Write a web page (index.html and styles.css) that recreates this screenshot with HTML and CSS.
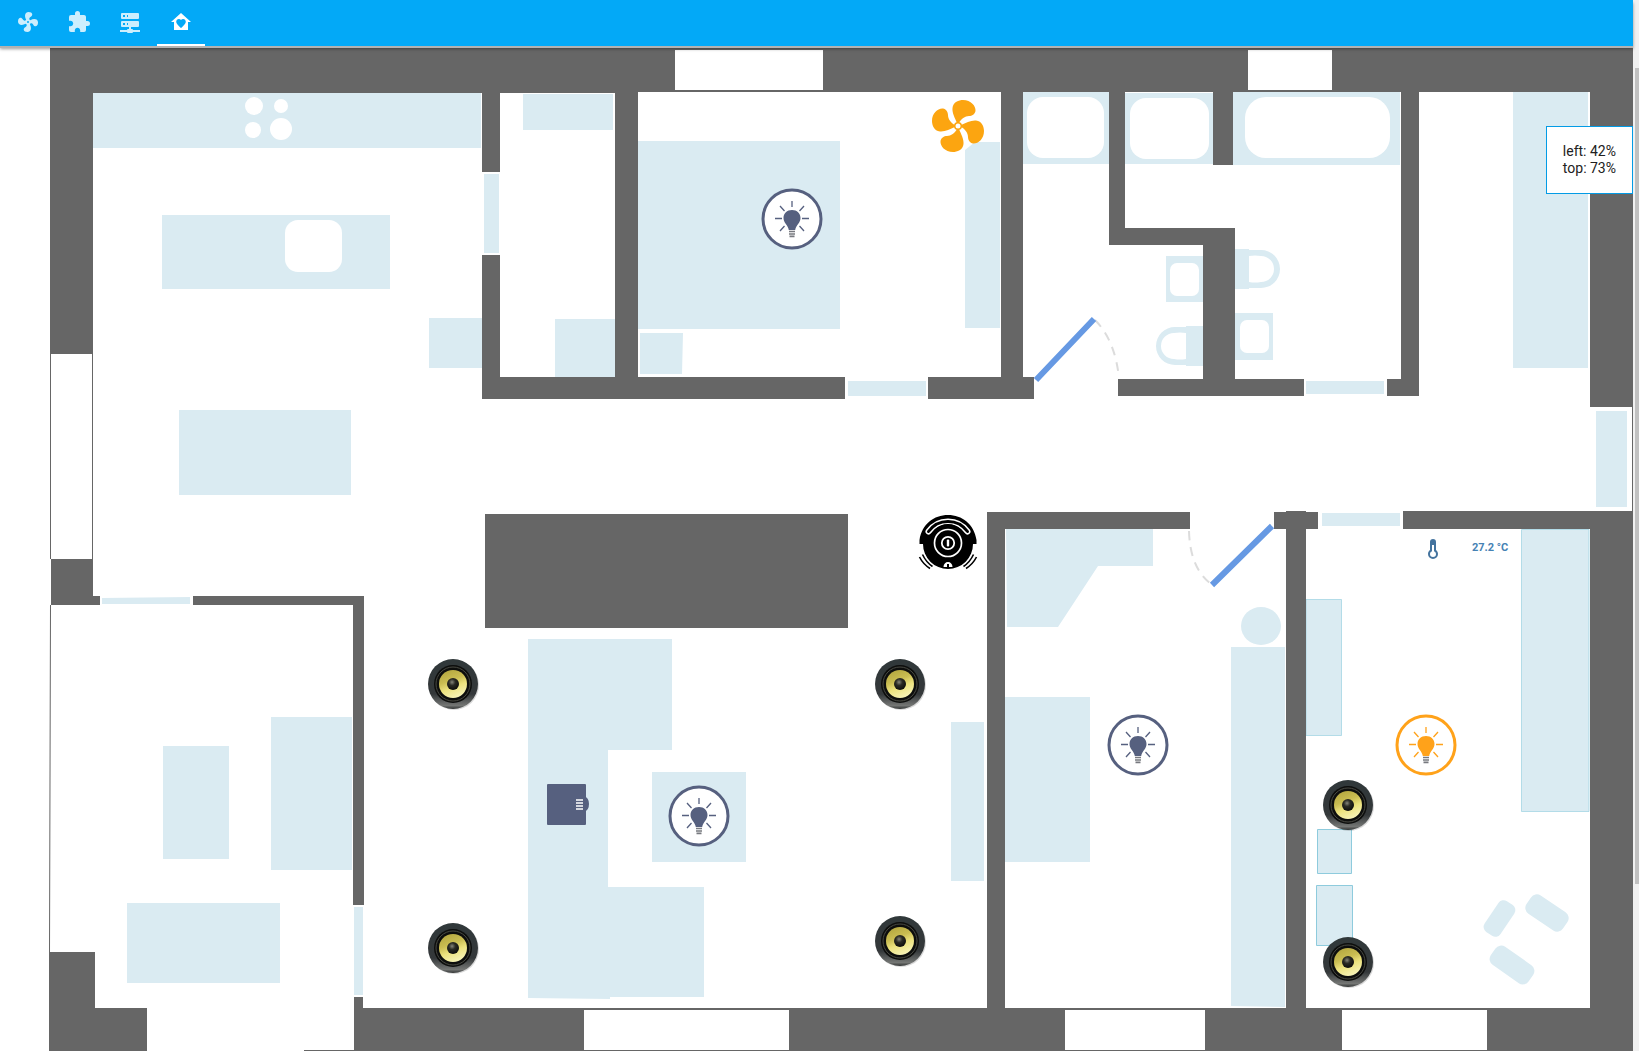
FILE: index.html
```html
<!DOCTYPE html>
<html lang="en">
<head>
<meta charset="utf-8">
<meta name="viewport" content="width=device-width, initial-scale=1">
<title>Home</title>
<link rel="stylesheet" href="styles.css">
</head>
<body>
<svg class="defs" aria-hidden="true">
  <defs>
    <linearGradient id="rim" x1="0" y1="0" x2="0" y2="1">
      <stop offset="0" stop-color="#30383a"/><stop offset=".7" stop-color="#34383a"/><stop offset=".93" stop-color="#747674"/><stop offset="1" stop-color="#303333"/>
    </linearGradient>
    <linearGradient id="cone" x1=".3" y1="0" x2=".7" y2="1">
      <stop offset="0" stop-color="#b5a840"/><stop offset=".35" stop-color="#cabd52"/><stop offset=".6" stop-color="#ece27e"/><stop offset="1" stop-color="#f8f5bd"/>
    </linearGradient>
    <radialGradient id="cap" cx=".42" cy=".35" r=".6">
      <stop offset="0" stop-color="#85857a"/><stop offset=".45" stop-color="#2b2b25"/><stop offset="1" stop-color="#11110e"/>
    </radialGradient>
    <symbol id="speaker" viewBox="-26 -26 52 52">
      <circle cx="1" cy="1" r="25" fill="#000" opacity=".15"/>
      <circle r="25" fill="url(#rim)"/>
      <circle r="19" fill="#0d0e0d"/>
      <circle r="17" fill="none" stroke="#494a43"/>
      <circle r="14" fill="url(#cone)"/>
      <circle r="6" fill="url(#cap)"/>
    </symbol>
    <symbol id="light" viewBox="-31 -31 62 62">
      <circle r="29" fill="#fff" stroke="currentColor" stroke-width="3"/>
      <path fill="currentColor" d="M0-9C5-9 8.500-5.500 8.500-1C8.500 4 4 6 3.200 11H-3.200C-4 6-8.500 4-8.500-1C-8.500-5.500-5-9 0-9Z"/>
      <path fill="none" stroke="currentColor" stroke-width="1.300" d="M0-18V-12M-17-.5H-10M17-.5H10M-12-13L-7.500-8M12-13L7.500-8M-12 12L-7.500 7M12 12L7.500 7"/>
      <path fill="none" stroke="#77797f" stroke-width="1.700" d="M-3 12.500H3M-3 15H3M-2.500 17.300H2.500"/>
    </symbol>
    <path id="blade" d="M-1-3C-3-8-6-13-5.500-18C-5-24 1-26 5-26C13-26 18-20 17.500-15C17-12 14-10 11-10C7-10 3-7 1-3Z"/>
  </defs>
</svg>

<div class="view">
  <nav class="tabs" aria-label="Views">
    <a class="tab" href="#climate" aria-label="Climate"><svg class="icon" viewBox="0 0 24 24"><path d="M12,11A1,1 0 0,0 11,12A1,1 0 0,0 12,13A1,1 0 0,0 13,12A1,1 0 0,0 12,11M12.500,2C17,2 17.110,5.570 14.750,6.750C13.760,7.240 13.320,8.290 13.130,9.220C13.610,9.420 14.030,9.730 14.350,10.130C18.050,8.130 22.030,8.920 22.030,12.500C22.030,17 18.460,17.100 17.280,14.730C16.780,13.740 15.720,13.300 14.790,13.110C14.590,13.590 14.280,14 13.880,14.340C15.870,18.030 15.080,22 11.500,22C7,22 6.910,18.420 9.270,17.240C10.250,16.750 10.690,15.710 10.890,14.790C10.400,14.590 9.970,14.270 9.650,13.870C5.960,15.850 2,15.070 2,11.500C2,7 5.560,6.890 6.740,9.260C7.240,10.250 8.290,10.680 9.220,10.870C9.410,10.390 9.730,9.970 10.140,9.650C8.150,5.960 8.940,2 12.500,2Z"/></svg></a>
    <a class="tab" href="#addons" aria-label="Add-ons"><svg class="icon" viewBox="0 0 24 24"><path d="M20.500,11H19V7C19,5.890 18.100,5 17,5H13V3.500A2.500,2.500 0 0,0 10.500,1A2.500,2.500 0 0,0 8,3.500V5H4A2,2 0 0,0 2,7V10.800H3.500C5,10.800 6.200,12 6.200,13.500C6.200,15 5,16.200 3.500,16.200H2V20A2,2 0 0,0 4,22H7.800V20.500C7.800,19 9,17.800 10.500,17.800C12,17.800 13.200,19 13.200,20.500V22H17A2,2 0 0,0 19,20V16H20.500A2.500,2.500 0 0,0 23,13.500A2.500,2.500 0 0,0 20.500,11Z"/></svg></a>
    <a class="tab" href="#network" aria-label="Network"><svg class="icon" viewBox="0 0 24 24"><path d="M13,19H14A1,1 0 0,1 15,20H22V22H15A1,1 0 0,1 14,23H10A1,1 0 0,1 9,22H2V20H9A1,1 0 0,1 10,19H11V17H4A1,1 0 0,1 3,16V12A1,1 0 0,1 4,11H20A1,1 0 0,1 21,12V16A1,1 0 0,1 20,17H13V19M4,3H20A1,1 0 0,1 21,4V8A1,1 0 0,1 20,9H4A1,1 0 0,1 3,8V4A1,1 0 0,1 4,3M9,7H10V5H9V7M9,15H10V13H9V15M5,5V7H7V5H5M5,13V15H7V13H5Z"/></svg></a>
    <a class="tab tab-active" href="#floorplan" aria-label="Floor plan" aria-current="page"><svg class="icon" viewBox="0 0 24 24"><path fill-rule="evenodd" d="M12,3L2,12H5V20H19V12H22L12,3M12,18L11.300,17.400C8.800,15.100 7.200,13.600 7.200,11.800C7.200,10.300 8.400,9.100 9.900,9.100C10.700,9.100 11.500,9.500 12,10.100C12.500,9.500 13.300,9.100 14.100,9.100C15.600,9.100 16.800,10.300 16.800,11.800C16.800,13.600 15.200,15.100 12.700,17.400L12,18Z"/></svg></a>
  </nav>

  <main class="plan">
    <svg class="plan-drawing" viewBox="0 46 1633 1005" role="img" aria-label="Floor plan of the house">
      <!-- furniture -->
      <g class="furniture">
        <path d="M93 93H481V148H93ZM162 215H390V289H162ZM429 318H482V368H429ZM179 410H351V495H179Z"/>
        <path d="M163 746H229V859H163ZM271 717H352V870H271ZM127 903H280V983H127Z"/>
        <path d="M523 94H613V130H523ZM555 319H615V377H555ZM638 141H840V329H638ZM640 333H683L682 374H640ZM975 142H1000V328H965V150Z"/>
        <path d="M1023 92H1109V164H1023ZM1125 93H1213V164H1125ZM1233 92H1400V165H1233ZM1166 256H1203V302H1166ZM1235 313H1273V360H1235ZM1513 92H1588V368H1513Z"/>
        <path d="M1235 249H1249V250H1261A19 19 0 0 1 1261 288H1249V289H1235ZM1203 326H1186V327H1175A19 19 0 0 0 1175 365H1186V366H1203Z"/>
        <path d="M528 639H672V750H608V887H704V997H610V999L528 998ZM652 772H746V862H652ZM951 722H984V881H951Z"/>
        <path d="M1006 529H1153V566H1098L1058 627H1007ZM1005 697H1090V862H1005ZM1231 647H1285V1007L1231 1006Z"/>
        <ellipse cx="1261" cy="626" rx="20" ry="19"/>
        <rect x="1481" y="909" width="37" height="19" rx="6" transform="rotate(-56 1499.500 918.500)"/>
        <rect x="1525" y="902" width="44" height="22" rx="7" transform="rotate(34 1547 913)"/>
        <rect x="1489" y="954" width="46" height="22" rx="7" transform="rotate(35 1512 965)"/>
        <g class="outlined">
          <path d="M1306 599.500H1341.500V735.500H1306ZM1521.500 529.500H1589V811.500H1521.500Z" stroke-opacity=".6"/>
          <path d="M1317.500 829.500H1351.500V873.500H1317.500ZM1316.500 885.500H1352.500V945.500H1316.500Z"/>
        </g>
      </g>
      <!-- basins, hobs and baths -->
      <g class="hollow">
        <circle cx="254" cy="106" r="9"/><circle cx="281" cy="106" r="7"/><circle cx="253" cy="130" r="8"/><circle cx="281" cy="129" r="11"/>
        <rect x="285" y="220" width="57" height="52" rx="13"/>
        <rect x="1027" y="97" width="77" height="61" rx="16"/>
        <rect x="1130" y="98" width="79" height="61" rx="16"/>
        <rect x="1245" y="97" width="145" height="61" rx="21"/>
        <rect x="1170" y="263" width="29" height="33" rx="7"/>
        <rect x="1240" y="320" width="29" height="33" rx="7"/>
        <path d="M1249 256Q1255 255 1261 256A13 13 0 0 1 1261 282Q1255 283 1249 282ZM1186 333Q1180 332 1174 333A13 13 0 0 0 1174 359Q1180 360 1186 359Z"/>
      </g>
      <!-- walls -->
      <g class="walls">
        <path d="M50 47H1633V92H638V93H93V354H50ZM51 559H93V596H100V605H51ZM193 596H364V905H353V605H193Z"/>
        <path d="M49 952H95V1008H147V1051H49ZM354 997H363V1008H987V512H1190V529H1005V1008H1286V529H1274V512H1286V511H1306V512H1318V529H1306V1008H1590V529H1403V511H1633V1051H354Z"/>
        <path d="M482 92H500V172H482ZM482 255H500V377H615V92H638V377H845V399H482ZM1001 92H1023V377H1034V399H928V377H1001Z"/>
        <path d="M1109 92H1125V228H1235V379H1304V396H1118V379H1203V245H1109ZM1213 92H1233V165H1213ZM1401 92H1419V396H1387V379H1401ZM1590 92H1633V407H1590Z"/>
        <path d="M485 514H848V628H485Z"/>
      </g>
      <!-- windows -->
      <g class="hollow">
        <path d="M675 50H823V90H675ZM1248 50H1332V90H1248ZM584 1010H789V1050H584ZM1065 1010H1205V1050H1065ZM1342 1010H1487V1050H1342Z"/>
      </g>
      <path class="edge" d="M50.500 354V559M92.500 354V559M50.500 605L49.500 952M1632.500 407V511M304 1050.500H354"/>
      <!-- sliding doors -->
      <g class="furniture">
        <path d="M484 174H499V253H484ZM848 381H926V396H848ZM1306 381H1384V394H1306ZM1322 513H1400V526H1322ZM102 598L190 597V604H102ZM354 907H363V995H354ZM1596 411H1627V507H1596Z"/>
      </g>
      <!-- hinged doors -->
      <path class="swing" d="M1095 320Q1115 340 1119 378M1189 531Q1190 568 1211 584"/>
      <path class="door" d="M1036 380L1094 319M1212 585L1272 526"/>
    </svg>

    <button class="device fan" type="button" aria-label="Bedroom fan"><svg viewBox="-27 -27 54 54"><use href="#blade"/><use href="#blade" transform="rotate(90)"/><use href="#blade" transform="rotate(180)"/><use href="#blade" transform="rotate(270)"/><circle r="4"/><circle r="2.500" fill="#fff" stroke="none"/></svg></button>
    <button class="device light light-bedroom" type="button" aria-label="Bedroom light"><svg><use href="#light"/></svg></button>
    <button class="device light light-living" type="button" aria-label="Living room light"><svg><use href="#light"/></svg></button>
    <button class="device light light-study" type="button" aria-label="Study light"><svg><use href="#light"/></svg></button>
    <button class="device light light-office light-on" type="button" aria-label="Office light"><svg><use href="#light"/></svg></button>
    <button class="device speaker speaker-nw" type="button" aria-label="Living room speaker, rear left"><svg><use href="#speaker"/></svg></button>
    <button class="device speaker speaker-sw" type="button" aria-label="Living room speaker, front left"><svg><use href="#speaker"/></svg></button>
    <button class="device speaker speaker-ne" type="button" aria-label="Living room speaker, rear right"><svg><use href="#speaker"/></svg></button>
    <button class="device speaker speaker-se" type="button" aria-label="Living room speaker, front right"><svg><use href="#speaker"/></svg></button>
    <button class="device speaker speaker-office-n" type="button" aria-label="Office speaker, left"><svg><use href="#speaker"/></svg></button>
    <button class="device speaker speaker-office-s" type="button" aria-label="Office speaker, right"><svg><use href="#speaker"/></svg></button>
    <button class="device vacuum" type="button" aria-label="Vacuum cleaner">
      <svg viewBox="-30 -30 60 60">
        <path d="M-28.500 1V-3C-26-19-14-28 0-28S26-19 28.500-3V1H25A25 25 0 0 1-25 1Z"/>
        <g fill="none" stroke="#fff">
          <path stroke-width="6" stroke-linecap="round" d="M-19.500-11.500C-10-25 10-25 19.500-11.500"/>
          <path stroke="#000" stroke-width="3" stroke-linecap="round" d="M-19.500-11.500C-10-25 10-25 19.500-11.500"/>
          <circle r="17" stroke="#000" stroke-width="4"/>
          <circle r="13.500" stroke-width="1.700"/><circle r="6.200" stroke-width="1.800"/>
        </g>
        <rect x="-1.200" y="-3.500" width="2.400" height="7" rx="1" fill="#fff"/>
        <path fill="#fff" d="M-4.500 24A4.500 5 0 0 1 4.500 24H1V21H-1V24Z"/>
        <path fill="none" stroke="#000" stroke-width="1.600" d="M-28.500 14Q-25 21-18 25.500M-25.500 11.500Q-22 19-15.500 23.500M28.500 14Q25 21 18 25.500M25.500 11.500Q22 19 15.500 23.500"/>
      </svg>
    </button>
    <button class="device projector" type="button" aria-label="Projector">
      <svg viewBox="0 0 42 42"><rect y="1" width="39" height="41" rx="1"/><ellipse cx="38" cy="21" rx="4" ry="7"/><path fill="none" stroke="#fff" stroke-width="1.600" d="M29 17H36M29 20H36M29 23H36M29 26H36"/></svg>
    </button>
    <button class="device thermometer" type="button" aria-label="Office temperature"><svg viewBox="0 0 24 24"><path d="M17,17A5,5 0 0,1 12,22A5,5 0 0,1 7,17C7,15.360 7.790,13.910 9,13V5A3,3 0 0,1 12,2A3,3 0 0,1 15,5V13C16.210,13.910 17,15.360 17,17M11,8V14.170C9.830,14.580 9,15.690 9,17A3,3 0 0,0 12,20A3,3 0 0,0 15,17C15,15.690 14.170,14.580 13,14.170V8H11Z"/></svg></button>
    <span class="device reading">27.2 °C</span>
    <div class="position-tip">left: 42%<br>top: 73%</div>
  </main>
</div>
<div class="scroll-track" aria-hidden="true"><div class="scroll-thumb"></div></div>
</body>
</html>
```
FILE: styles.css
```css
* {
  box-sizing: border-box;
}

body {
  margin: 0;
  display: flex;
  background: #fff;
  color: #212121;
  font-family: Roboto, "Noto Sans", sans-serif;
  font-size: 14px;
  line-height: 17px;
}

.defs {
  position: absolute;
  width: 0;
  height: 0;
}

.view {
  flex: 1;
  min-width: 0;
}

/* Tab bar */
.tabs {
  position: relative;
  z-index: 1;
  display: flex;
  gap: 3px;
  height: 46px;
  padding-left: 4px;
  background: #03a9f7;
  box-shadow: 0 2px 0 #b2b2b2, 0 3px 3px rgba(0, 0, 0, 0.4);
}

.tab {
  display: flex;
  justify-content: center;
  width: 48px;
  padding-top: 10px;
  color: #cdeefd;
  border-bottom: 2px solid transparent;
}

.tab-active {
  color: #fff;
  border-bottom-color: #fff;
}

.icon {
  width: 24px;
  height: 24px;
  fill: currentColor;
}

/* Floor plan */
.plan {
  position: relative;
  overflow: hidden;
}

.plan-drawing {
  display: block;
  width: 100%;
  height: auto;
}

.walls {
  fill: #666;
}

.furniture {
  fill: #daebf2;
}

.outlined {
  stroke: #8ecbdd;
}

.hollow {
  fill: #fff;
}

.edge {
  fill: none;
  stroke: #666;
}

.swing {
  fill: none;
  stroke: #dcdcdc;
  stroke-width: 2;
  stroke-dasharray: 9 7;
}

.door {
  fill: none;
  stroke: #6699e3;
  stroke-width: 6;
}

/* Devices placed on the plan */
.device {
  position: absolute;
  padding: 0;
  border: 0;
  background: none;
  transform: translate(-50%, -50%);
}

.device svg {
  display: block;
  width: 100%;
  height: 100%;
}

.light {
  width: 62px;
  height: 62px;
  color: #56607f;
}

.light-on {
  color: #ffa21a;
}

.light-bedroom { left: 48.5%; top: 17.2%; }
.light-living { left: 42.8%; top: 76.6%; }
.light-study { left: 69.7%; top: 69.6%; }
.light-office { left: 87.3%; top: 69.6%; }

.speaker {
  width: 52px;
  height: 52px;
}

.speaker-nw { left: 27.75%; top: 63.5%; }
.speaker-sw { left: 27.75%; top: 89.8%; }
.speaker-ne { left: 55.1%; top: 63.5%; }
.speaker-se { left: 55.1%; top: 89.1%; }
.speaker-office-n { left: 82.55%; top: 75.5%; }
.speaker-office-s { left: 82.55%; top: 91.1%; }

.fan {
  left: 58.65%;
  top: 8%;
  width: 54px;
  height: 54px;
  fill: #fca510;
  stroke: #b98a45;
  stroke-width: 0;
}

.vacuum {
  left: 58.05%;
  top: 49.5%;
  width: 60px;
  height: 60px;
}

.projector {
  left: 34.8%;
  top: 75.4%;
  width: 42px;
  height: 42px;
  fill: #56607f;
}

.thermometer {
  left: 87.75%;
  top: 50%;
  width: 24px;
  height: 24px;
  fill: #44739e;
}

.reading {
  left: 91.25%;
  top: 49.9%;
  color: #4682b4;
  font-size: 11px;
  font-weight: 700;
  white-space: nowrap;
}

.position-tip {
  position: absolute;
  top: 8%;
  right: 0;
  padding: 16px;
  border: 1px solid #039be5;
  background: #fff;
}

/* Scroll bar */
.scroll-track {
  width: 6px;
  padding: 68px 0 0 2px;
  background: #f1f1f1;
}

.scroll-thumb {
  height: 83%;
  background: #c1c1c1;
}
```
